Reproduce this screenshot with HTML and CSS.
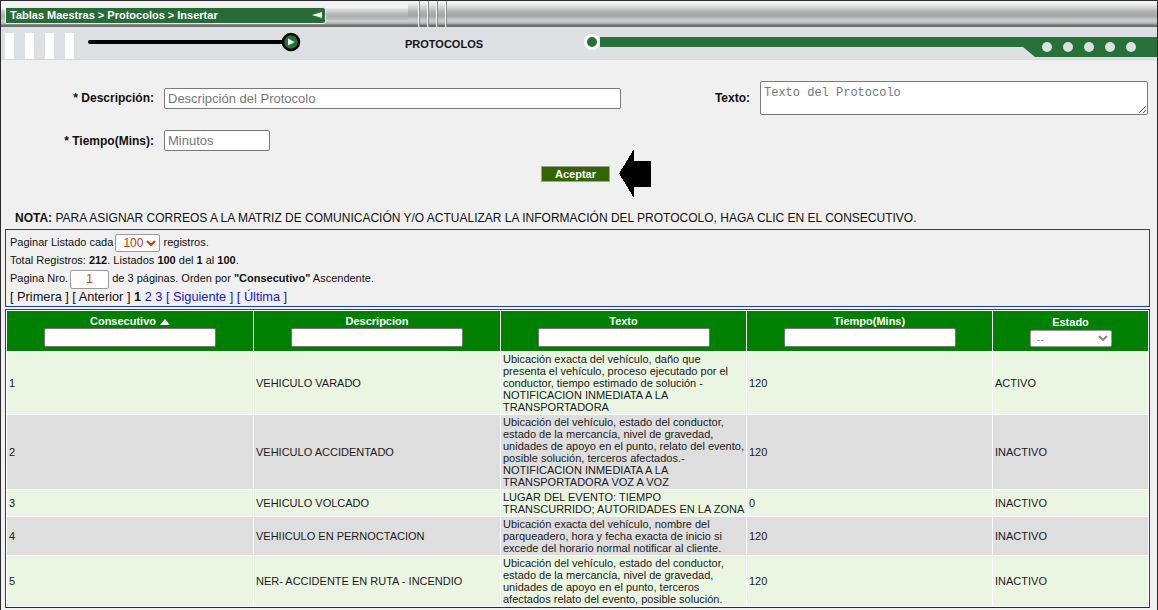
FILE: index.html
```html
<!DOCTYPE html>
<html lang="es">
<head>
<meta charset="utf-8">
<title>Protocolos</title>
<link rel="stylesheet" href="styles.css">
</head>
<body>
<div class="page">
  <header class="hdr">
    <div class="topbar">
      <div class="tb-left">
        <div class="crumb"><span>Tablas Maestras &gt; Protocolos &gt; Insertar</span><i class="crumb-tri"></i></div>
      </div>
      <div class="grip"></div>
      <div class="tb-right"></div>
    </div>
    <div class="band">
      <div class="bars"><i></i><i></i><i></i><i></i></div>
      <svg class="slider" width="216" height="32" viewBox="0 0 216 32">
        <line x1="4" y1="15" x2="198" y2="15" stroke="#000" stroke-width="4" stroke-linecap="round"/>
        <circle cx="205" cy="15" r="8" fill="#277139" stroke="#000" stroke-width="2.6"/>
        <polygon points="202,11.5 208.5,15 202,18.5" fill="#fff"/>
      </svg>
      <div class="band-title">PROTOCOLOS</div>
      <div class="track">
        <i class="knob"></i>
        <div class="track-line"></div>
        <div class="track-end"><i></i><i></i><i></i><i></i><i></i></div>
      </div>
    </div>
  </header>

  <main class="content">
    <div class="form">
      <div class="frow">
        <label class="flabel" for="desc">* Descripción:</label>
        <input id="desc" class="in in-desc" placeholder="Descripción del Protocolo">
        <label class="flabel flabel-2" for="texto">Texto:</label>
        <textarea id="texto" class="in-text" placeholder="Texto del Protocolo"></textarea>
      </div>
      <div class="frow frow-2">
        <label class="flabel" for="mins">* Tiempo(Mins):</label>
        <input id="mins" class="in in-time" placeholder="Minutos">
      </div>
    </div>

    <div class="actions">
      <button class="btn" type="button">Aceptar</button>
      <svg class="arrow" width="33" height="50" viewBox="0 0 33 50" shape-rendering="crispEdges">
        <polygon points="0,24.5 15,0 15,12 32,12 32,38 15,38 15,49" fill="#000"/>
      </svg>
    </div>

    <p class="nota"><b>NOTA:</b> PARA ASIGNAR CORREOS A LA MATRIZ DE COMUNICACIÓN Y/O ACTUALIZAR LA INFORMACIÓN DEL PROTOCOLO, HAGA CLIC EN EL CONSECUTIVO.</p>

    <div class="pager">
      <div class="pg-line">Paginar Listado cada <select class="pg-select"><option>100</option></select> registros.</div>
      <div class="pg-line">Total Registros: <b>212</b>. Listados <b>100</b> del <b>1</b> al <b>100</b>.</div>
      <div class="pg-line pg-line-3">Pagina Nro. <input class="pg-page" value="1"> de 3 páginas. Orden por <b>"Consecutivo"</b> Ascendente.</div>
      <div class="pg-nav">[ Primera ] [ Anterior ] <b>1</b> <a href="#">2</a> <a href="#">3</a> <a href="#">[ Siguiente ]</a> <a href="#">[ Última ]</a></div>
    </div>

    <div class="grid-box">
      <table class="grid">
        <colgroup><col class="c1"><col class="c2"><col class="c3"><col class="c4"><col class="c5"></colgroup>
        <thead>
          <tr>
            <th><div class="th-title">Consecutivo <svg class="sort" width="10" height="7" viewBox="0 0 10 7"><polygon points="0,7 5,1 10,7" fill="#fff"/></svg></div><input class="th-filter"></th>
            <th><div class="th-title">Descripcion</div><input class="th-filter"></th>
            <th><div class="th-title">Texto</div><input class="th-filter"></th>
            <th><div class="th-title">Tiempo(Mins)</div><input class="th-filter"></th>
            <th><div class="th-title th-title-e">Estado</div><select class="th-select"><option>--</option></select></th>
          </tr>
        </thead>
        <tbody>
          <tr class="odd">
            <td>1</td><td>VEHICULO VARADO</td>
            <td>Ubicación exacta del vehículo, daño que presenta el vehículo, proceso ejecutado por el conductor, tiempo estimado de solución - NOTIFICACION INMEDIATA A LA TRANSPORTADORA</td>
            <td>120</td><td>ACTIVO</td>
          </tr>
          <tr class="even">
            <td>2</td><td>VEHICULO ACCIDENTADO</td>
            <td>Ubicación del vehículo, estado del conductor, estado de la mercancía, nivel de gravedad, unidades de apoyo en el punto, relato del evento, posible solución, terceros afectados.- NOTIFICACION INMEDIATA A LA TRANSPORTADORA VOZ A VOZ</td>
            <td>120</td><td>INACTIVO</td>
          </tr>
          <tr class="odd">
            <td>3</td><td>VEHICULO VOLCADO</td>
            <td>LUGAR DEL EVENTO: TIEMPO TRANSCURRIDO; AUTORIDADES EN LA ZONA</td>
            <td>0</td><td>INACTIVO</td>
          </tr>
          <tr class="even">
            <td>4</td><td>VEHIICULO EN PERNOCTACION</td>
            <td>Ubicación exacta del vehículo, nombre del parqueadero, hora y fecha exacta de inicio si excede del horario normal notificar al cliente.</td>
            <td>120</td><td>INACTIVO</td>
          </tr>
          <tr class="odd">
            <td>5</td><td>NER- ACCIDENTE EN RUTA - INCENDIO</td>
            <td>Ubicación del vehículo, estado del conductor, estado de la mercancía, nivel de gravedad, unidades de apoyo en el punto, terceros afectados relato del evento, posible solución.</td>
            <td>120</td><td>INACTIVO</td>
          </tr>
        </tbody>
      </table>
    </div>
  </main>
</div>
</body>
</html>
```

FILE: styles.css
```css
* { box-sizing: border-box; }
html, body { margin: 0; padding: 0; }
body {
  font-family: "Liberation Sans", Arial, sans-serif;
  background: #f0f0f0;
  color: #111;
}
.page {
  width: 1158px;
  height: 610px;
  overflow: hidden;
  border: 1px solid #2a2a2a;
  border-bottom: 0;
  background: #f0f0f0;
}

/* ---------- header ---------- */
.topbar {
  display: flex;
  align-items: flex-end;
  height: 26px;
  background: #f3f3f3;
}
.tb-left {
  width: 407px;
  height: 26px;
  background: linear-gradient(to bottom,
    #f3f3f3 0, #f3f3f3 7px, #dedfdf 8px, #c6c8c8 11px, #acafaf 15px,
    #b9bbbb 18px, #d2d3d3 20px, #a8aaaa 23px, #707171 24px, #6c6d6d 26px);
  padding: 6px 0 0 4px;
  border-top-right-radius: 6px;
}
.crumb {
  width: 321px;
  height: 17px;
  background: #286b37;
  border: 1px solid #e9eaea;
  border-left-color: #f5f5f5;
  border-radius: 0 3px 3px 0;
  color: #fff;
  font-size: 11px;
  font-weight: bold;
  line-height: 15px;
  padding-left: 4px;
  display: flex;
  align-items: center;
  justify-content: space-between;
  padding-right: 3px;
}
.crumb-tri {
  width: 0;
  height: 0;
  border-top: 3.5px solid transparent;
  border-bottom: 3.5px solid transparent;
  border-right: 10px solid #fff;
  margin-top: -2px;
}
.grip {
  width: 39px;
  height: 26px;
  background:
    repeating-linear-gradient(to right, transparent 0 6px, #f4f4f4 6px 7px, #8d8f8f 7px 8px, transparent 8px 9px),
    linear-gradient(to bottom, #f6f6f6 0, #e9eaea 3px, #cfd0d0 7px, #aeb0b0 11px, #a4a7a7 15px,
      #c2c4c4 18px, #cfd0d0 20px, #a6a8a8 23px, #707171 24px, #6a6b6b 26px);
  background-size: 36px 100%, 100% 100%;
  background-repeat: no-repeat;
  background-position: 4px 0, 0 0;
}
.tb-right {
  flex: 1;
  height: 26px;
  background: linear-gradient(to bottom, #f6f6f6 0, #eeeeee 3px, #cfd0d0 7px, #aeb0b0 11px, #a4a7a7 15px,
    #c2c4c4 18px, #cfd0d0 20px, #a6a8a8 23px, #707171 24px, #6a6b6b 26px);
}

.band {
  display: flex;
  align-items: flex-start;
  height: 32px;
  background: #dde0e3;
}
.bars {
  display: flex;
  gap: 11px;
  margin: 6px 0 0 4px;
}
.bars i {
  display: block;
  width: 9px;
  height: 26px;
  background: #fff;
}
.slider {
  display: block;
  margin-left: 12px;
}
.band-title {
  width: 179px;
  margin: 10px 0 0 103px;
  font-size: 11px;
  font-weight: bold;
  line-height: 14px;
  color: #151515;
}
.track {
  flex: 1;
  display: flex;
  align-items: flex-start;
}
.knob {
  display: block;
  width: 16px;
  height: 16px;
  margin-top: 7px;
  border-radius: 50%;
  background: #277139;
  border: 3px solid #fff;
}
.track-line {
  flex: 1;
  height: 10px;
  margin-top: 10px;
  background: #277139;
}
.track-end {
  width: 134px;
  height: 20px;
  margin-top: 10px;
  background: #277139;
  clip-path: polygon(0 0, 100% 0, 100% 100%, 12px 100%, 0 10px);
  display: flex;
  gap: 11px;
  padding: 5px 0 0 19px;
}
.track-end i {
  display: block;
  width: 10px;
  height: 10px;
  border-radius: 50%;
  background: #dde0e3;
}

/* ---------- content ---------- */
.content {
  border-top: 1px solid #d6d6d6;
  border-top-right-radius: 4px;
  padding-top: 21px;
}
.frow {
  display: flex;
  align-items: center;
}
.frow-2 { margin-top: 15px; }
.flabel {
  width: 153px;
  text-align: right;
  font-size: 12px;
  font-weight: bold;
  color: #111;
}
.flabel-2 { width: 129px; }
.in {
  height: 21px;
  margin-left: 10px;
  border: 1px solid #7a7a7a;
  border-radius: 2px;
  background: #fff;
  font-family: "Liberation Sans", Arial, sans-serif;
  font-size: 13px;
  padding: 1px 3px;
}
.in::placeholder, .in-text::placeholder { color: #777; }
.in-desc { width: 457px; }
.in-time { width: 106px; }
.in-text {
  width: 388px;
  height: 34px;
  margin-left: 10px;
  border: 1px solid #7a7a7a;
  border-radius: 2px;
  background: #fff;
  font-family: "Liberation Mono", "Courier New", monospace;
  font-size: 12px;
  padding: 4px 3px 2px;
}

.actions {
  display: flex;
  align-items: center;
  margin-top: -2px;
  padding-left: 540px;
}
.btn {
  width: 69px;
  height: 16px;
  padding: 0;
  background: #336600;
  border: 1px solid #a0a0a0;
  color: #fff;
  font-family: "Liberation Sans", Arial, sans-serif;
  font-size: 11px;
  font-weight: bold;
  line-height: 14px;
}
.arrow {
  display: block;
  margin-left: 9px;
}

.nota {
  margin: 12px 0 0 14px;
  font-size: 12px;
  line-height: 14px;
  color: #111;
}

.pager {
  margin: 4px 7px 0 4px;
  border: 1px solid #1c3fa0;
  padding: 3px 4px 0;
  font-size: 11px;
  color: #111;
}
.pg-line {
  height: 18px;
  line-height: 18px;
  white-space: nowrap;
}
.pg-line-3 { height: 19px; line-height: 19px; }
.pg-select {
  width: 45px;
  height: 18px;
  margin: 0 0 0 -1px;
  vertical-align: middle;
  font-family: "Liberation Sans", Arial, sans-serif;
  font-size: 12px;
  color: #c8380c;
  background: #fff;
  border: 1px solid #9a9a9a;
  border-radius: 2px;
  padding: 0 0 0 3px;
}
.pg-page {
  width: 39px;
  height: 19px;
  margin: 0 0 0 -1px;
  vertical-align: middle;
  text-align: center;
  font-family: "Liberation Sans", Arial, sans-serif;
  font-size: 12px;
  color: #c8380c;
  background: #fff;
  border: 1px solid #9a9a9a;
  border-radius: 2px;
  padding: 0;
}
.pg-nav {
  height: 18px;
  line-height: 18px;
  font-size: 12.75px;
  color: #111;
}
.pg-nav a { color: #1818cc; text-decoration: none; }

.grid-box {
  margin: 2px 7px 0 4px;
  border: 1px solid #1c3fa0;
  border-bottom-color: #1c2a60;
}
.grid {
  width: 1143px;
  table-layout: fixed;
  border-collapse: separate;
  border-spacing: 1px;
  background: #fff;
}
.c1, .c2 { width: 246px; }
.c3, .c4 { width: 245px; }
.c5 { width: 155px; }
.grid th {
  background: #008000;
  color: #fff;
  font-size: 11px;
  font-weight: bold;
  padding: 4px 0 4px;
  vertical-align: top;
  text-align: center;
}
.th-title {
  line-height: 13px;
  display: flex;
  justify-content: center;
  align-items: center;
  gap: 4px;
}
.th-title-e { margin-top: 1px; }
.sort { display: block; margin-top: -1px; }
.th-filter {
  display: block;
  margin: 0 auto;
  width: 172px;
  height: 19px;
  border: 1px solid #767676;
  border-radius: 2px;
  background: #fff;
}
.th-select {
  display: block;
  margin: 1px auto 0;
  width: 82px;
  height: 17px;
  border: 1px solid #9a9a9a;
  border-radius: 2px;
  background: #fff;
  color: #888;
  font-family: "Liberation Sans", Arial, sans-serif;
  font-size: 11px;
  padding: 0 0 0 2px;
}
.grid td {
  font-size: 11px;
  line-height: 12px;
  padding: 1px 1px 1px 2px;
  vertical-align: middle;
  color: #1b1b1b;
}
.grid tr.odd td { background: #eaf5e2; }
.grid tr.even td { background: #dedede; }
```
